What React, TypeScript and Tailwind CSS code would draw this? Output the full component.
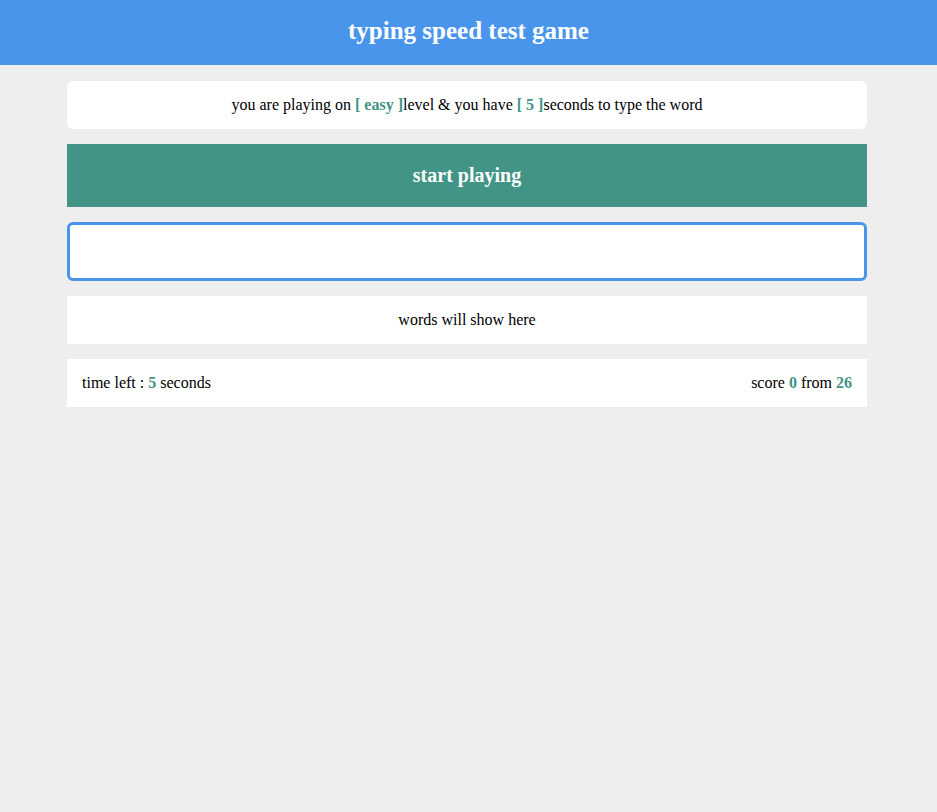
import React from 'react';

export default function App() {
  return (
    <div className="min-h-[812px] bg-[#eeeeee] font-['Liberation_Serif',serif] text-base text-black">
      <div className="flex h-[65px] items-center justify-center bg-[#4a95ec] pb-[3px]">
        <h1 className="text-[25px] font-bold text-white">typing speed test game</h1>
      </div>
      <div className="ml-[67px] flex w-[800px] flex-col gap-[15px] pt-4">
        <div className="flex h-[48px] items-center justify-center rounded-md bg-white">
          you are playing on&nbsp;<span className="font-bold text-[#419486]">[ easy ]</span>level &amp; you have&nbsp;
          <span className="font-bold text-[#419486]">[ 5 ]</span>seconds to type the word
        </div>
        <div className="flex h-[63px] items-center justify-center bg-[#419486] pb-[2px] text-xl font-bold text-white">
          start playing
        </div>
        <input
          className="h-[59px] rounded-md border-[3px] border-[#4a95ec] bg-white px-3 outline-none"
          type="text"
        />
        <div className="flex h-[48px] items-center justify-center bg-white">words will show here</div>
        <div className="flex h-[48px] items-center justify-between bg-white px-[15px]">
          <span>
            time left : <span className="font-bold text-[#419486]">5</span> seconds
          </span>
          <span>
            score <span className="font-bold text-[#419486]">0</span> from{' '}
            <span className="font-bold text-[#419486]">26</span>
          </span>
        </div>
      </div>
    </div>
  );
}
